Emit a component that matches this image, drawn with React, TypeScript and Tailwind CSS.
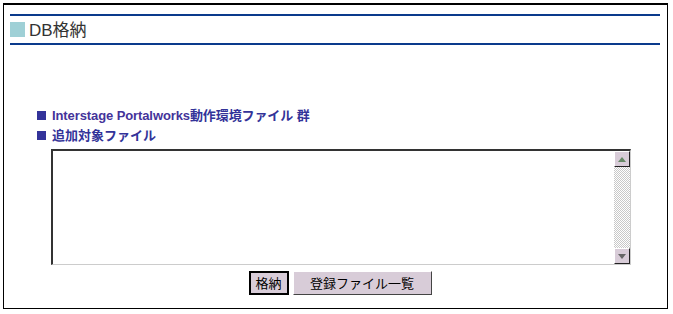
import React from "react";

const F = '"Liberation Sans", "Noto Sans CJK JP", sans-serif';

export default function App() {
  return (
    <div className="w-[673px] h-[314px] bg-white" style={{ fontFamily: F }}>
      <div className="relative ml-[3px] mt-[3px] w-[665px] h-[306px] border border-t-2 border-black">
        <div className="pl-[6px] pt-[9px] w-[656px]">
          <div className="h-[2px] bg-[#0a3a8c]" />
          <div className="flex items-center h-[27px]">
            <div className="w-[15px] h-[15px] bg-[#9fd0d6]" />
            <span className="ml-[4px] text-[17px] leading-none text-[#333333] mt-[1px]">DB格納</span>
          </div>
          <div className="h-[2px] bg-[#0a3a8c]" />
        </div>
        <div className="pl-[33px] pt-[60px] pb-[3px]">
          <div className="flex items-center h-[20px]">
            <div className="w-[9px] h-[9px] bg-[#33339a]" />
            <span className="ml-[6px] text-[13px] font-bold text-[#44339a] leading-none tracking-[-0.1px]">
              Interstage Portalworks<span className="text-[#333399]">動作環境ファイル 群</span>
            </span>
          </div>
          <div className="flex items-center h-[20px]">
            <div className="w-[9px] h-[9px] bg-[#33339a]" />
            <span className="ml-[6px] text-[13px] font-bold text-[#333399] leading-none">追加対象ファイル</span>
          </div>
        </div>
        <div className="ml-[47px] mt-[1px] w-[580px] h-[116px] flex border-t-2 border-l-2 border-[#333333] border-b border-r border-b-[#cccccc] border-r-[#cccccc]">
          <div className="flex-1 bg-white" />
          <div className="w-[16px] flex flex-col bg-[repeating-conic-gradient(#c8c8c8_0_25%,#ffffff_0_50%)] bg-[length:2px_2px]">
            <div className="w-[16px] h-[16px] bg-[#d8ccd8] border border-t-white border-l-white border-r-[#222] border-b-[#222] flex items-center justify-center">
              <svg width="8" height="5" viewBox="0 0 8 5"><path d="M4 0 L8 5 L0 5 Z" fill="#668866" /></svg>
            </div>
            <div className="flex-1" />
            <div className="w-[16px] h-[16px] bg-[#d8ccd8] border border-t-white border-l-white border-r-[#222] border-b-[#222] flex items-center justify-center">
              <svg width="8" height="5" viewBox="0 0 8 5"><path d="M0 0 L8 0 L4 5 Z" fill="#666666" /></svg>
            </div>
          </div>
        </div>
        <div className="flex justify-center gap-[4px] mt-[6px] pl-[9px]">
          <button className="h-[24px] w-[40px] bg-[#d8ccd8] border-2 border-black text-[13px] text-black leading-none flex items-center justify-center" style={{ fontFamily: F }}>
            格納
          </button>
          <button className="h-[24px] w-[139px] bg-[#d8ccd8] border border-t-white border-l-white border-r-[#444] border-b-[#444] text-[13px] text-black leading-none flex items-center justify-center" style={{ fontFamily: F }}>
            登録ファイル一覧
          </button>
        </div>
      </div>
    </div>
  );
}
